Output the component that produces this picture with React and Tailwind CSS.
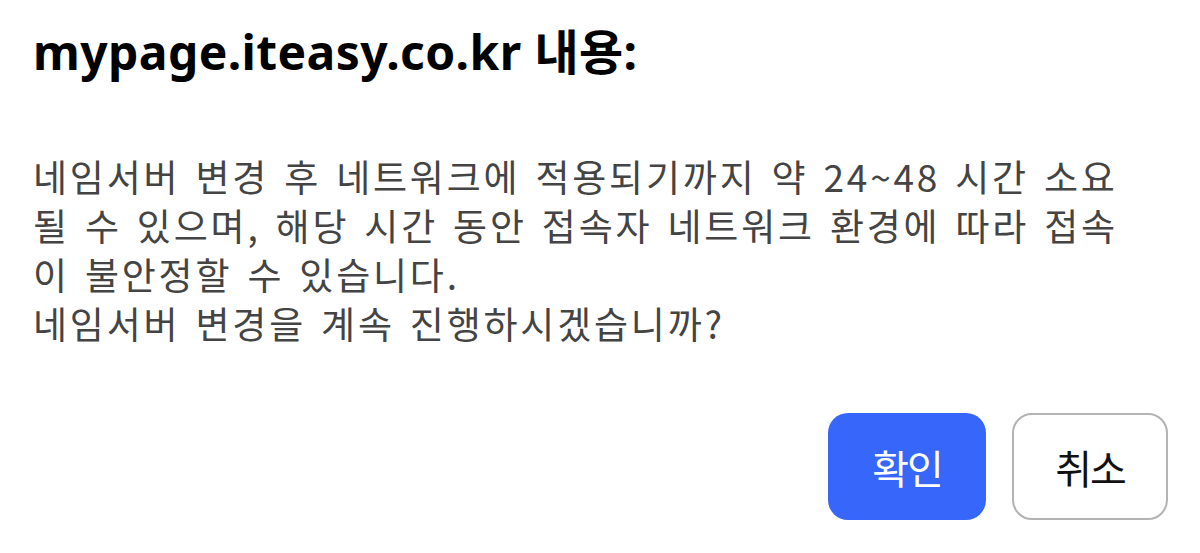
import React from "react";

const lines = [
  "네임서버 변경 후 네트워크에 적용되기까지 약 24~48 시간 소요",
  "될 수 있으며, 해당 시간 동안 접속자 네트워크 환경에 따라 접속",
  "이 불안정할 수 있습니다.",
  "네임서버 변경을 계속 진행하시겠습니까?",
];

export default function App() {
  return (
    <div className="w-[1200px] h-[553px] bg-white flex flex-col pl-[33px] pr-[32px] font-['Noto_Sans','Noto_Sans_CJK_KR',sans-serif]">
      {/* Title */}
      <h1 className="mt-[20px] text-[48px] leading-[64px] font-bold text-black whitespace-nowrap tracking-[0.4px]">
        mypage.iteasy.co.kr 내용:
      </h1>

      {/* Message */}
      <div className="mt-[68px] text-[37px] leading-[49px] tracking-[2.8px] [word-spacing:4px] text-[#444444] font-['Noto_Sans_CJK_KR',sans-serif]">
        {lines.map((l, i) => (
          <p key={i} className="whitespace-nowrap">
            {l}
          </p>
        ))}
      </div>

      {/* Buttons */}
      <div className="mt-auto mb-[33px] flex justify-end gap-[26px]">
        <button className="w-[158px] h-[107px] rounded-[20px] bg-[#3767fa] text-white text-[40px] tracking-[-2px] font-['Noto_Sans_CJK_KR',sans-serif]">
          확인
        </button>
        <button className="w-[156px] h-[107px] rounded-[20px] border-2 border-[#b3b3b3] bg-white text-[#111] text-[40px] tracking-[-2px] font-['Noto_Sans_CJK_KR',sans-serif]">
          취소
        </button>
      </div>
    </div>
  );
}
